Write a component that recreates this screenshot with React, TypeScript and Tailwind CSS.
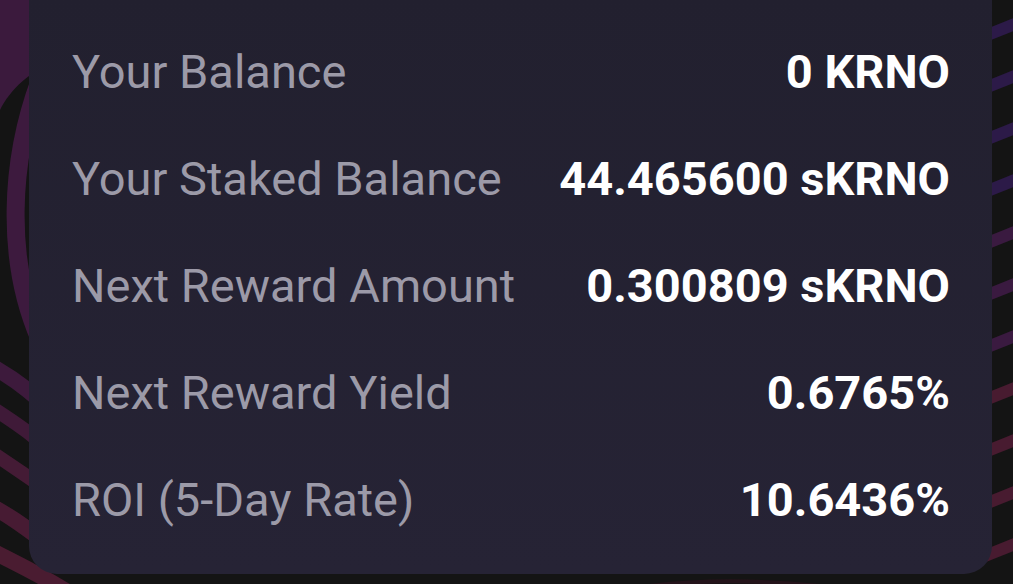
const rows = [
  { label: "Your Balance", value: "0 KRNO" },
  { label: "Your Staked Balance", value: "44.465600 sKRNO" },
  { label: "Next Reward Amount", value: "0.300809 sKRNO" },
  { label: "Next Reward Yield", value: "0.6765%" },
  { label: "ROI (5-Day Rate)", value: "10.6436%" },
];

function Backdrop() {
  const stripes = Array.from({ length: 12 }, (_, i) => i);
  return (
    <svg className="absolute inset-0 h-full w-full" viewBox="0 0 1013 584" preserveAspectRatio="none">
      <rect width="1013" height="584" fill="#141414" />
      {/* left swirl */}
      <path d="M0 0 H60 V60 C30 70 10 90 0 110 Z" fill="#3b1a3d" />
      <path d="M40 80 C10 160 5 260 40 340" stroke="#3d1a3e" strokeWidth="18" fill="none" />
      <path d="M-20 360 C20 380 40 400 60 420" stroke="#3d1a3c" strokeWidth="16" fill="none" />
      <path d="M-20 400 C20 425 40 440 60 460" stroke="#3f1a38" strokeWidth="14" fill="none" />
      <path d="M-20 445 C20 470 40 485 60 500" stroke="#441b35" strokeWidth="14" fill="none" />
      <path d="M-20 500 C20 520 40 540 70 560" stroke="#471b33" strokeWidth="16" fill="none" />
      <path d="M-20 545 C20 565 50 580 80 600" stroke="#4a1c31" strokeWidth="16" fill="none" />
      {/* right stripes */}
      {stripes.map((i) => (
        <line
          key={i}
          x1="960"
          y1={46 + i * 52}
          x2="1030"
          y2={18 + i * 52}
          stroke={i < 4 ? "#2c1a48" : i < 7 ? "#3a1a40" : "#481b30"}
          strokeWidth="12"
        />
      ))}
      <path d="M650 586 C700 580 760 580 820 586" stroke="#24131a" strokeWidth="4" fill="none" />
    </svg>
  );
}

export default function App() {
  return (
    <div className="relative h-[584px] w-full overflow-hidden bg-[#141414]" style={{ fontFamily: "Roboto, 'Liberation Sans', sans-serif" }}>
      <Backdrop />
      <div className="relative ml-[29px] mr-[21px] h-[574px] rounded-b-[28px] bg-gradient-to-b from-[#22202f] to-[#262335] pl-[43px] pr-[42px] pt-[19px] pb-[20px]">
        {rows.map((r) => (
          <div key={r.label} className="flex h-[107px] items-center justify-between">
            <span className="text-[47px] text-[#9c9aa8]">{r.label}</span>
            <span className="text-[47px] font-bold text-white">{r.value}</span>
          </div>
        ))}
      </div>
    </div>
  );
}
